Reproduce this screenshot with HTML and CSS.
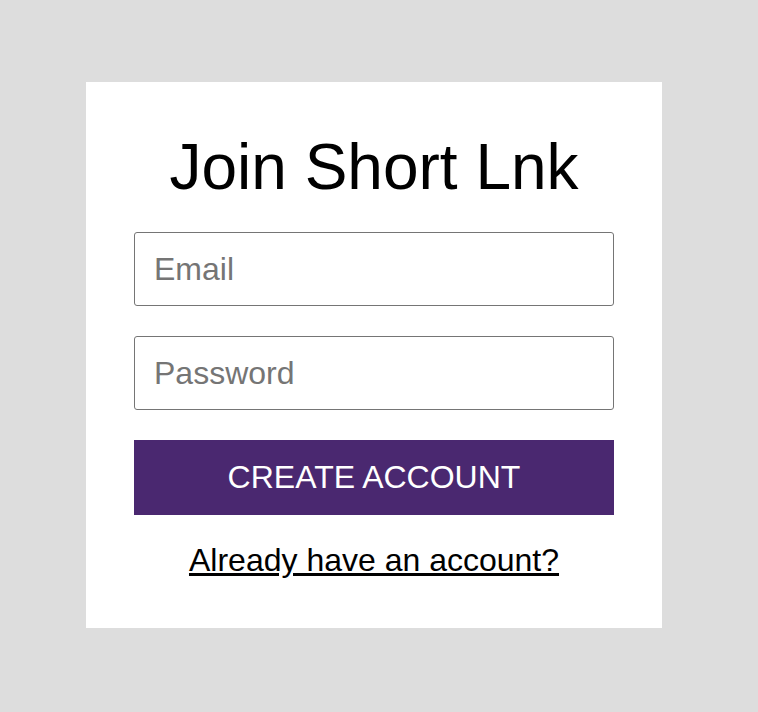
FILE: index.html
```html
<!DOCTYPE html>
<html lang="en">
<head>
<meta charset="utf-8">
<title>Join Short Lnk</title>
<link rel="stylesheet" href="styles.css">
</head>
<body>
<div class="boxed-view">
  <div class="boxed-view__box">
    <h1 class="boxed-view__title">Join Short Lnk</h1>
    <form class="boxed-view__form">
      <input class="field" type="email" name="email" placeholder="Email">
      <input class="field" type="password" name="password" placeholder="Password">
      <button class="button" type="button">Create Account</button>
    </form>
    <p class="boxed-view__footer"><a class="link" href="#">Already have an account?</a></p>
  </div>
</div>
</body>
</html>
```

FILE: styles.css
```css
html, body {
  margin: 0;
  padding: 0;
}

body {
  background: #dddddd;
  font-family: "Liberation Sans", Arial, sans-serif;
  color: #000;
}

.boxed-view {
  display: flex;
  align-items: flex-start;
  justify-content: flex-start;
  padding: 82px 0 0 86px;
  min-height: 712px;
  box-sizing: border-box;
}

.boxed-view__box {
  background: #ffffff;
  width: 576px;
  height: 546px;
  box-sizing: border-box;
  padding: 48px 48px 0;
  text-align: center;
}

.boxed-view__title {
  margin: 0 0 28px;
  font-size: 64px;
  font-weight: normal;
  line-height: 74px;
}

.boxed-view__form {
  display: flex;
  flex-direction: column;
  gap: 30px;
}

.field {
  display: block;
  width: 100%;
  height: 74px;
  box-sizing: border-box;
  margin: 0;
  padding: 0 19px;
  border: 1px solid #757575;
  border-radius: 3px;
  background: #fff;
  font-family: "Liberation Sans", Arial, sans-serif;
  font-size: 32px;
  color: #000;
  outline: none;
}

.field::placeholder {
  color: #757575;
  opacity: 1;
}

.button {
  display: block;
  width: 100%;
  height: 75px;
  margin: 0;
  padding: 0;
  border: none;
  border-radius: 0;
  background: #4a2870;
  color: #ffffff;
  font-family: "Liberation Sans", Arial, sans-serif;
  font-size: 32px;
  text-transform: uppercase;
  cursor: pointer;
}

.boxed-view__footer {
  margin: 27px 0 0;
  font-size: 32px;
  line-height: normal;
}

.link {
  color: #000;
  text-decoration: underline;
}
```
